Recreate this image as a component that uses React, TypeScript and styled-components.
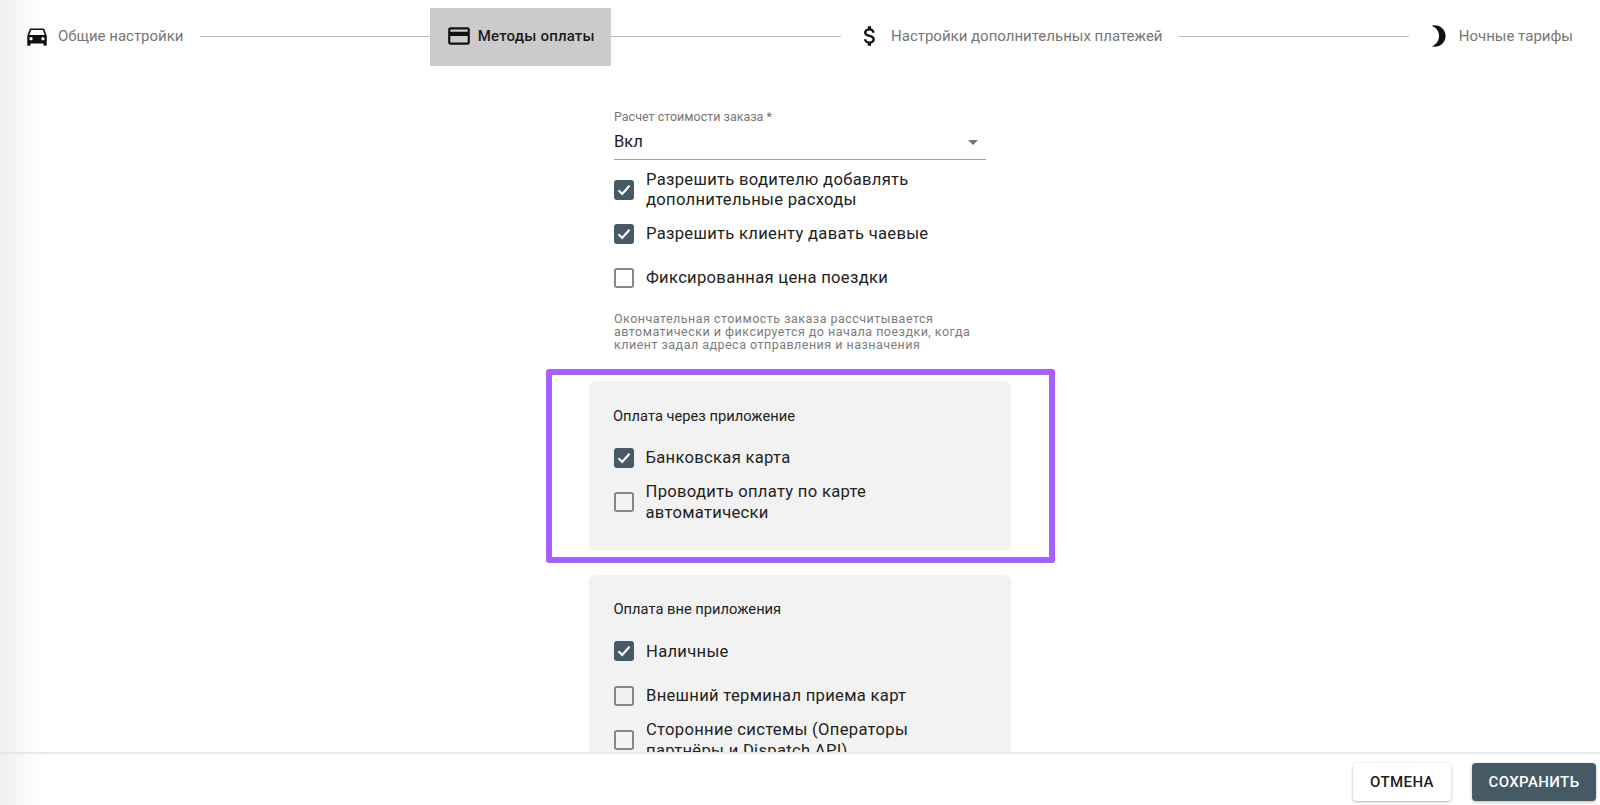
import React from "react";
import styled, { createGlobalStyle } from "styled-components";
import { MdDirectionsCar, MdCreditCard, MdAttachMoney, MdBrightness3, MdArrowDropDown } from "react-icons/md";

const Global = createGlobalStyle`
  html, body { margin: 0; padding: 0; height: 100%; }
  body { font-family: Roboto, "Liberation Sans", sans-serif; color: #1f1f1f; background: #fff; }
`;

const Page = styled.div`
  width: 1600px;
  height: 805px;
  display: flex;
  flex-direction: column;
  overflow: hidden;
  background: linear-gradient(90deg, #f0f0f0 0, #f8f8f8 24px, #fff 46px);
`;

const Stepper = styled.nav`
  display: flex;
  align-items: center;
  height: 58px;
  margin-top: 8px;
  padding: 0 11px 0 8px;
  flex: none;
`;

const Step = styled.div<{ $active?: boolean }>`
  display: flex;
  align-items: center;
  gap: ${(p) => (p.$active ? 6 : 8)}px;
  height: 58px;
  box-sizing: border-box;
  padding: 0 16px 3px;
  font-size: 15px;
  white-space: nowrap;
  font-weight: ${(p) => (p.$active ? 500 : 400)};
  letter-spacing: ${(p) => (p.$active ? 0.2 : 0)}px;
  color: ${(p) => (p.$active ? "#1c1c1c" : "#767676")};
  background: ${(p) => (p.$active ? "#cbcbcb" : "transparent")};
  svg { color: #111; flex: none; }
`;

const Connector = styled.div`
  flex: 1;
  height: 1px;
  margin-bottom: 2px;
  background: #bdbdbd;
`;

const Scroll = styled.main`
  flex: 1;
  min-height: 0;
  overflow: hidden;
  display: flex;
  flex-direction: column;
  align-items: center;
  padding-top: 43px;
`;

const Form = styled.div`
  width: 372px;
  flex: none;
`;

const SelectField = styled.div`
  border-bottom: 1px solid #a3a3a3;
  height: 51px;
  box-sizing: border-box;
  margin-bottom: 8px;
  display: flex;
  flex-direction: column;
`;

const SelectLabel = styled.label`
  font-size: 12.5px;
  line-height: 16px;
  color: #757575;
`;

const SelectValue = styled.div`
  display: flex;
  align-items: center;
  justify-content: space-between;
  font-size: 16.6px;
  line-height: 24px;
  margin-top: 5px;
  color: #1c1c1c;
  svg { color: #757575; flex: none; margin-right: 1px; }
`;

const Row = styled.label`
  display: flex;
  align-items: center;
  gap: 12px;
  min-height: 44px;
  font-size: 16.6px;
  line-height: 20.5px;
  letter-spacing: 0.3px;
  color: #222;
  width: 372px;
`;

const Box = styled.span<{ $on?: boolean }>`
  width: 20px;
  height: 20px;
  flex: none;
  box-sizing: border-box;
  border-radius: 3px;
  display: flex;
  align-items: center;
  justify-content: center;
  background: ${(p) => (p.$on ? "#455a64" : "transparent")};
  border: ${(p) => (p.$on ? "none" : "2px solid #858585")};
`;

const Helper = styled.p`
  margin: 12px 0 0;
  font-size: 12.5px;
  line-height: 13px;
  letter-spacing: 0.48px;
  color: #7c7c7c;
  width: 372px;
`;

const Highlight = styled.div`
  box-sizing: border-box;
  width: 509px;
  flex: none;
  margin-top: 18px;
  padding: 6px 37px 7px;
  border: 6px solid #a560ff;
  border-radius: 3px;
`;

const Card = styled.section`
  box-sizing: border-box;
  width: 422px;
  flex: none;
  background: #f2f2f2;
  border-radius: 6px;
  padding: 25.5px 24px 25px 25px;

  ${Row} {
    min-height: 44.5px;
    line-height: 21px;
  }
`;

const LowerCard = styled(Card)`
  margin-top: 12px;
`;

const CardTitle = styled.h3`
  margin: 0 0 11px -0.5px;
  font-size: 14.7px;
  line-height: 18px;
  font-weight: 400;
  color: #222;
`;

const Footer = styled.footer`
  flex: none;
  height: 53px;
  box-sizing: border-box;
  border-top: 2px solid #e8e8e8;
  display: flex;
  align-items: flex-start;
  justify-content: flex-end;
  gap: 21px;
  padding: 9px 4px 0 0;
`;

const Button = styled.button<{ $primary?: boolean }>`
  height: 38px;
  border: none;
  border-radius: 4px;
  font-family: Roboto, "Liberation Sans", sans-serif;
  font-size: 15px;
  font-weight: 500;
  letter-spacing: 0.4px;
  width: ${(p) => (p.$primary ? 124 : 98)}px;
  background: ${(p) => (p.$primary ? "#455a64" : "#fff")};
  color: ${(p) => (p.$primary ? "#fff" : "#1c1c1c")};
  box-shadow: 0 1px 3px rgba(0, 0, 0, 0.3);
`;

const Check = ({ on }: { on?: boolean }) => (
  <Box $on={on}>
    {on && (
      <svg width="14" height="12" viewBox="0 0 14 12" aria-hidden>
        <path d="M1.5 6.2 5.2 10 12.5 1.8" fill="none" stroke="#fff" strokeWidth="2.2" />
      </svg>
    )}
  </Box>
);

const Option = ({ on, children }: { on?: boolean; children: React.ReactNode }) => (
  <Row>
    <Check on={on} />
    <span>{children}</span>
  </Row>
);

export default function App() {
  return (
    <Page>
      <Global />
      <Stepper>
        <Step><MdDirectionsCar size={26} />Общие настройки</Step>
        <Connector />
        <Step $active><MdCreditCard size={26} />Методы оплаты</Step>
        <Connector />
        <Step><MdAttachMoney size={26} />Настройки дополнительных платежей</Step>
        <Connector />
        <Step><MdBrightness3 size={26} />Ночные тарифы</Step>
      </Stepper>
      <Scroll>
        <Form>
          <SelectField>
            <SelectLabel>Расчет стоимости заказа *</SelectLabel>
            <SelectValue>Вкл<MdArrowDropDown size={24} /></SelectValue>
          </SelectField>
          <Option on>Разрешить водителю добавлять<br />дополнительные расходы</Option>
          <Option on>Разрешить клиенту давать чаевые</Option>
          <Option>Фиксированная цена поездки</Option>
          <Helper>Окончательная стоимость заказа рассчитывается автоматически и фиксируется до начала поездки, когда клиент задал адреса отправления и назначения</Helper>
        </Form>
        <Highlight>
          <Card>
            <CardTitle>Оплата через приложение</CardTitle>
            <Option on>Банковская карта</Option>
            <Option>Проводить оплату по карте<br />автоматически</Option>
          </Card>
        </Highlight>
        <LowerCard>
          <CardTitle>Оплата вне приложения</CardTitle>
          <Option on>Наличные</Option>
          <Option>Внешний терминал приема карт</Option>
          <Option>Сторонние системы (Операторы<br />партнёры и Dispatch API)</Option>
        </LowerCard>
      </Scroll>
      <Footer>
        <Button>ОТМЕНА</Button>
        <Button $primary>СОХРАНИТЬ</Button>
      </Footer>
    </Page>
  );
}
